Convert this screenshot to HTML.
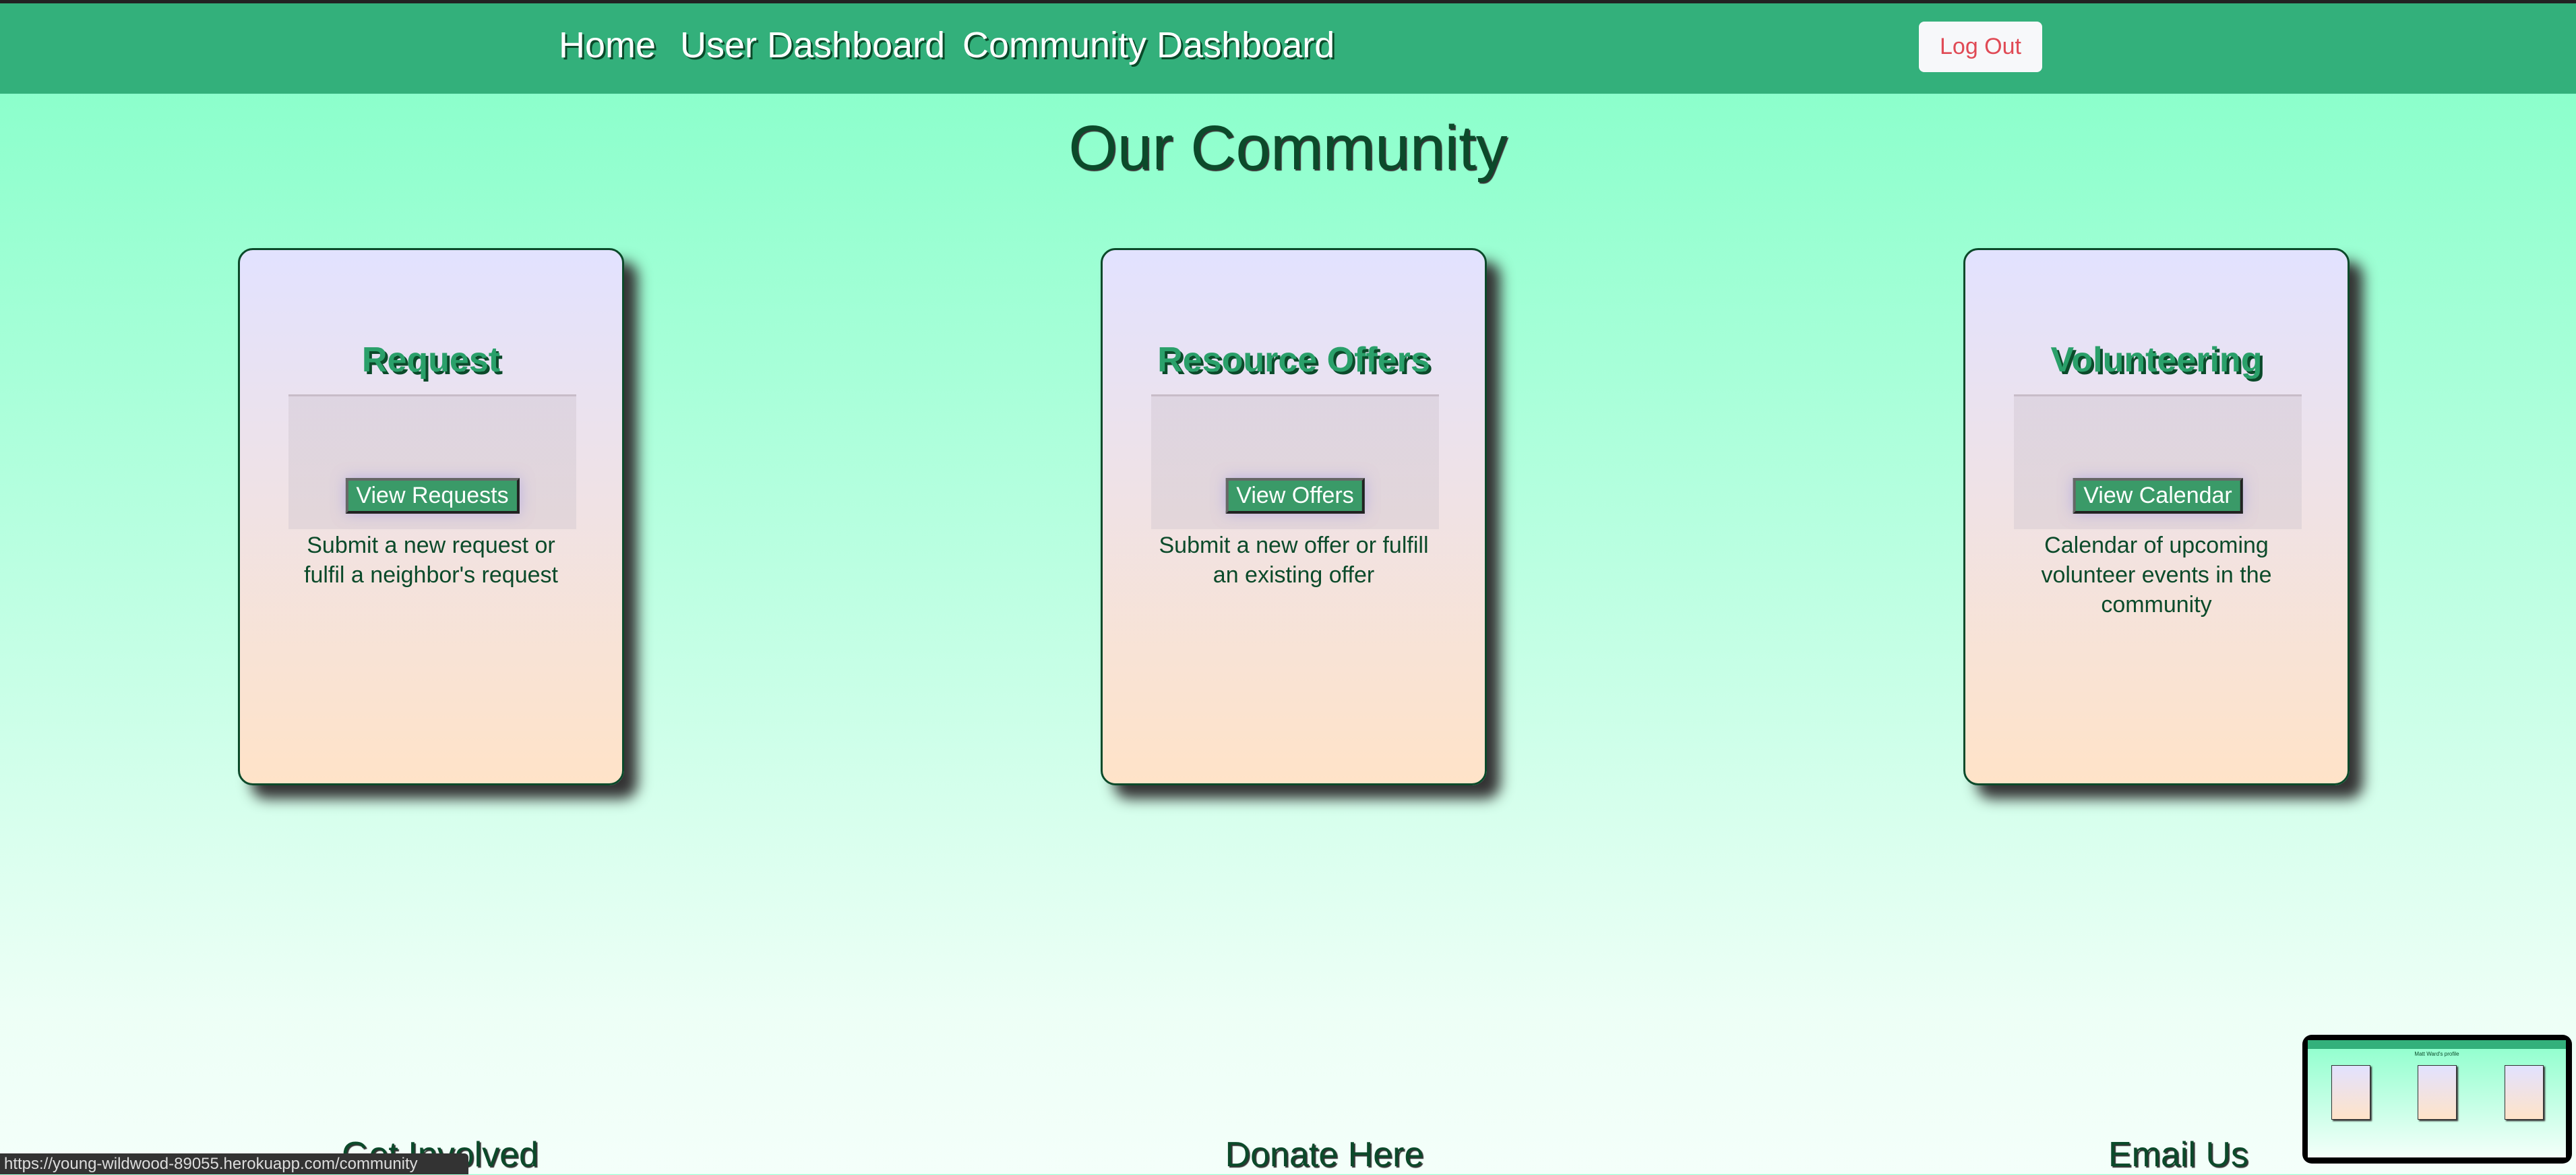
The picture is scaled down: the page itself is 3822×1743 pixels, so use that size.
<!DOCTYPE html>
<html><head><meta charset="utf-8"><style>
*{margin:0;padding:0;box-sizing:border-box}
body{width:3822px;height:1742px;overflow:hidden;position:relative;font-family:"Liberation Sans",sans-serif;background:linear-gradient(#8cffcc 139px,#b8ffe0 800px,#edfff6 1500px,#f4fffa 1742px)}
.nav{position:absolute;left:0;top:0;width:3822px;height:139px;background:#33b07b;border-top:5px solid #222}
.nav a{position:absolute;top:31px;font-size:54px;color:#fff;text-shadow:3px 3px 0 #0a4a2a;text-decoration:none;white-space:nowrap}
.logout{position:absolute;left:2847px;top:27px;width:183px;height:75px;background:#f7f8fa;border-radius:8px;color:#e04a55;font-size:34px;text-align:center;line-height:75px}
h1{position:absolute;left:0;width:3822px;top:166px;text-align:center;font-size:93px;font-weight:normal;color:#0b4a2a;text-shadow:2px 2px 1px #333}
.card{position:absolute;top:368px;width:573px;height:797px;border:3px solid #0b4a2a;border-radius:22px;background:linear-gradient(#e2e2ff,#ffe3c8);box-shadow:20px 20px 20px #333}
.card h2{position:absolute;top:133px;width:100%;text-align:center;font-size:52px;color:#2aa06a;text-shadow:4px 4px 0 #0b4a2a}
.box{position:absolute;left:72px;top:214px;width:427px;height:200px;background:rgba(200,190,200,.35);border-top:3px solid #c8bcc8}
.btn{position:absolute;top:121px;left:50%;transform:translateX(-50%);height:53px;padding:0 12px;background:#3a9a68;border:4px solid;border-color:#666 #222 #222 #666;color:#fff;font-size:34px;line-height:45px;white-space:nowrap;box-shadow:0 0 20px rgba(150,140,230,.5)}
.desc{position:absolute;top:416px;left:75px;right:75px;text-align:center;font-size:34px;line-height:44px;color:#0b4a2a}
.foot{position:absolute;top:1683px;font-size:52px;color:#0b4a2a;text-shadow:2px 2px 1px #333;transform:translateX(-50%);white-space:nowrap}
.status{position:absolute;left:0;top:1711px;width:695px;height:31px;background:#333;color:#ddd;font-size:24px;line-height:31px;padding-left:6px;border-top-right-radius:6px}
.thumb{position:absolute;left:3416px;top:1535px;width:400px;height:191px;background:#000;border-radius:14px}
.scr{position:absolute;left:8px;top:8px;width:383px;height:174px;background:linear-gradient(#8cffcc,#f4fffa)}
.tn{position:absolute;left:0;top:0;width:100%;height:13px;background:#33b07b}
.tc{position:absolute;top:37px;width:58px;height:81px;background:linear-gradient(#e2e2ff,#ffe3c8);border:1px solid #333;box-shadow:2px 2px 2px #333}
</style></head><body>
<div class="nav">
<a style="left:829px">Home</a>
<a style="left:1009px">User Dashboard</a>
<a style="left:1428px">Community Dashboard</a>
<div class="logout">Log Out</div>
</div>
<h1>Our Community</h1>
<div class="card" style="left:353px"><h2>Request</h2><div class="box"><div class="btn">View Requests</div></div><div class="desc">Submit a new request or fulfil a neighbor's request</div></div>
<div class="card" style="left:1633px"><h2>Resource Offers</h2><div class="box"><div class="btn">View Offers</div></div><div class="desc">Submit a new offer or fulfill an existing offer</div></div>
<div class="card" style="left:2913px"><h2>Volunteering</h2><div class="box"><div class="btn">View Calendar</div></div><div class="desc">Calendar of upcoming volunteer events in the community</div></div>
<div class="foot" style="left:653px">Get Involved</div>
<div class="foot" style="left:1965px">Donate Here</div>
<div class="foot" style="left:3232px">Email Us</div>
<div class="status">https://young-wildwood-89055.herokuapp.com/community</div>
<div class="thumb"><div class="scr"><div class="tn"></div>
<div style="position:absolute;top:16px;width:100%;text-align:center;font-size:8px;color:#0b4a2a">Matt Ward's profile</div>
<div class="tc" style="left:35px"></div><div class="tc" style="left:163px"></div><div class="tc" style="left:292px"></div>
</div></div>
</body></html>
